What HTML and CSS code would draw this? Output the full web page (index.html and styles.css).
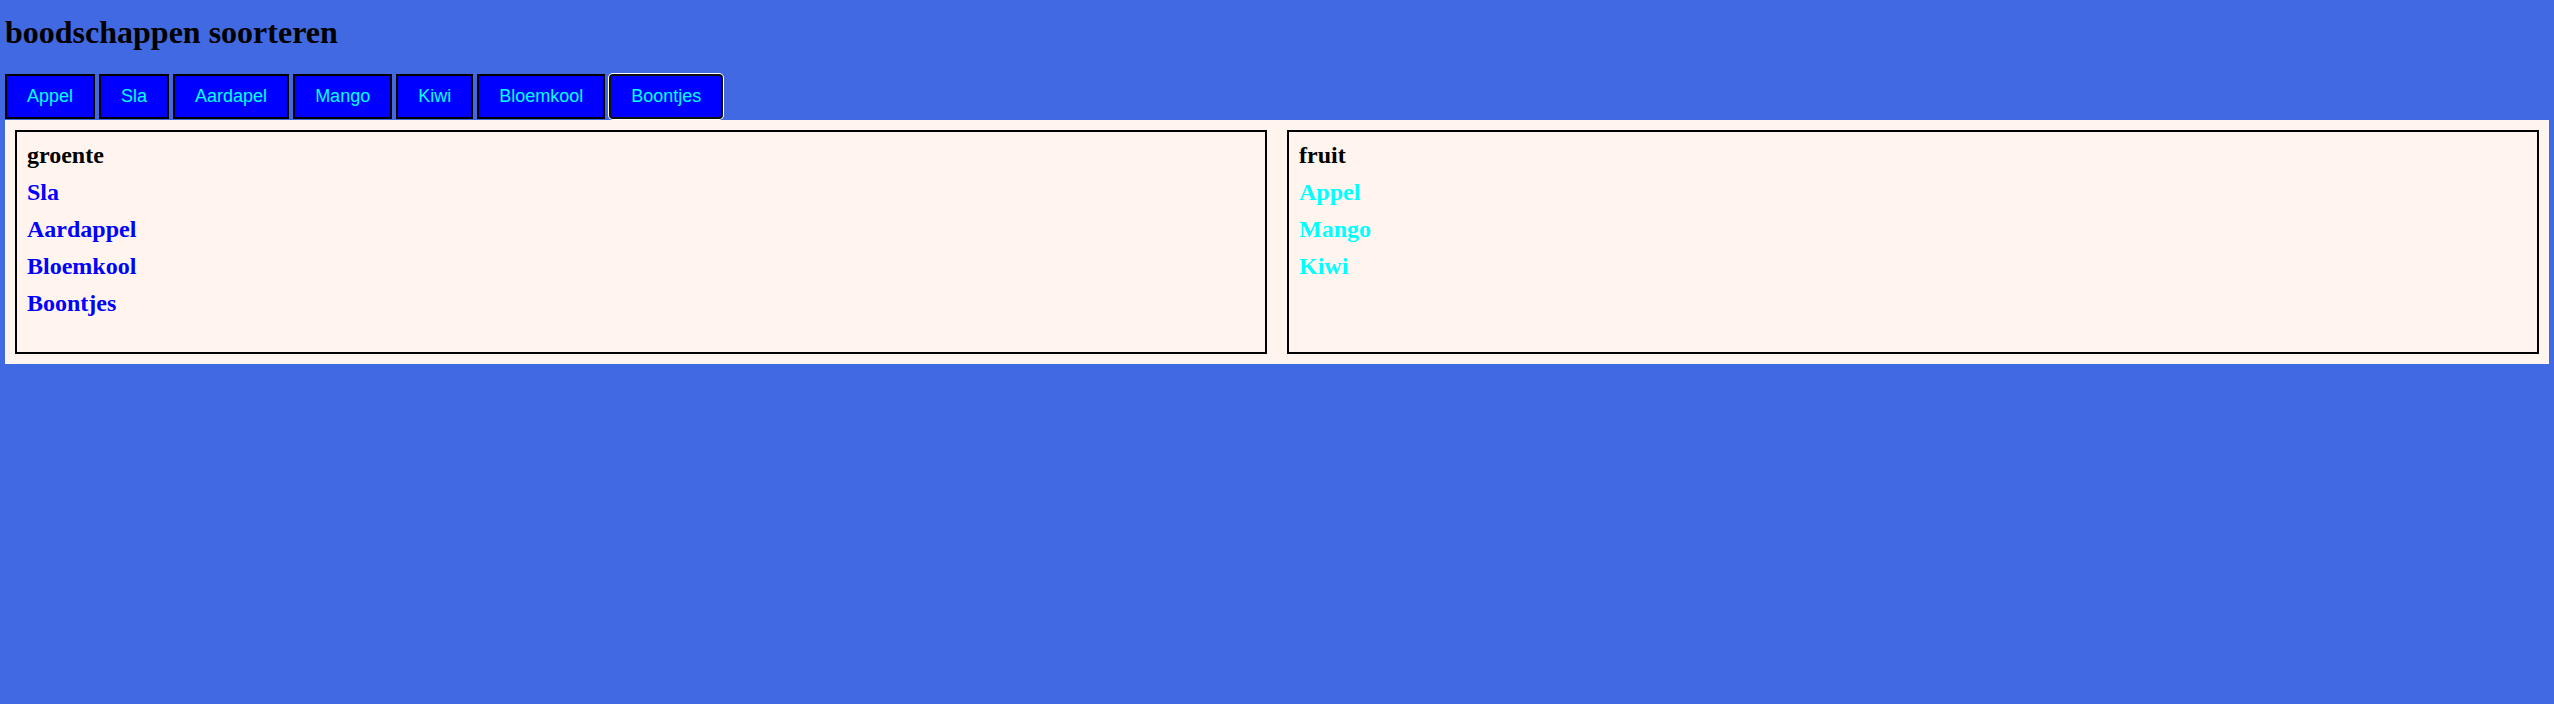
FILE: index.html
```html
<!DOCTYPE html>
<html lang="nl">
<head>
  <meta charset="UTF-8" />
  <meta name="viewport" content="width=device-width, initial-scale=1.0"/>
  <title>boodschappen soorteren</title>
  <link rel="stylesheet" href="styles.css">
</head>
<body>

  <h1>boodschappen soorteren</h1>

  <div class="knoppen">
    <button class="knop">Appel</button>
    <button class="knop">Sla</button>
    <button class="knop">Aardapel</button>
    <button class="knop">Mango</button>
    <button class="knop">Kiwi</button>
    <button class="knop">Bloemkool</button>
    <button class="knop focus">Boontjes</button>
  </div>

  <div class="bakken">
    <div class="bak">
      <div class="kop">groente</div>
      <div class="item groente">Sla</div>
      <div class="item groente">Aardappel</div>
      <div class="item groente">Bloemkool</div>
      <div class="item groente">Boontjes</div>
    </div>
    <div class="bak">
      <div class="kop">fruit</div>
      <div class="item fruit">Appel</div>
      <div class="item fruit">Mango</div>
      <div class="item fruit">Kiwi</div>
    </div>
  </div>

</body>
</html>
```

FILE: styles.css
```css
body {
  margin: 0;
  padding: 0 5px;
  background: royalblue;
  font-family: "Liberation Serif", "Times New Roman", serif;
}

h1 {
  font-size: 32px;
  font-weight: 700;
  margin: 14px 0 23px;
}

.knoppen {
  display: flex;
  gap: 4px;
}

.knop {
  font-family: "Liberation Sans", Arial, sans-serif;
  font-size: 18px;
  color: cyan;
  background: blue;
  border: 2px solid black;
  padding: 10px 20px;
  margin: 0;
  cursor: pointer;
}

/* knop die laatst is aangeklikt */
.knop.focus {
  border-color: #101010;
  border-radius: 4px;
  box-shadow: 0 0 0 1px white;
}

.bakken {
  display: flex;
  gap: 20px;
  padding: 10px;
  margin-top: 1px;
  background: seashell;
}

.bak {
  flex: 1;
  min-height: 200px;
  padding: 10px;
  border: 2px solid black;
}

.kop,
.item {
  font-size: 24px;
  font-weight: 700;
  line-height: 27px;
  margin-bottom: 10px;
}

.groente {
  color: blue;
}

.fruit {
  color: cyan;
}
```
